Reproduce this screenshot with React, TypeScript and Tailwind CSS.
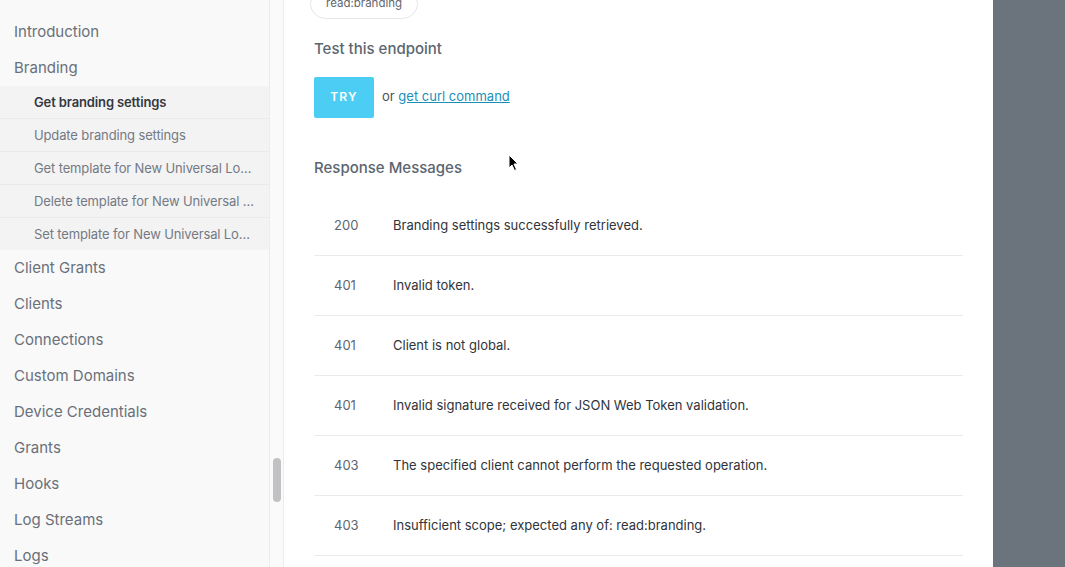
const topBefore = ['Introduction', 'Branding']
const subItems = [
  'Get branding settings',
  'Update branding settings',
  'Get template for New Universal Login Experience',
  'Delete template for New Universal Login Experience',
  'Set template for New Universal Login Experience',
]
const topAfter = [
  'Client Grants',
  'Clients',
  'Connections',
  'Custom Domains',
  'Device Credentials',
  'Grants',
  'Hooks',
  'Log Streams',
  'Logs',
]
const responses = [
  { code: '200', text: 'Branding settings successfully retrieved.' },
  { code: '401', text: 'Invalid token.' },
  { code: '401', text: 'Client is not global.' },
  { code: '401', text: 'Invalid signature received for JSON Web Token validation.' },
  { code: '403', text: 'The specified client cannot perform the requested operation.' },
  { code: '403', text: 'Insufficient scope; expected any of: read:branding.' },
  { code: '429', text: 'Too many requests. Check the X-RateLimit-Limit, X-RateLimit-Remaining and X-RateLimit-Reset headers.' },
]

const font = { fontFamily: 'Inter, "Noto Sans", sans-serif' }

export default function App() {
  return (
    <div className="relative flex h-[567px] w-[1065px] overflow-hidden bg-white" style={font}>
      {/* sidebar */}
      <aside className="flex h-full shrink-0">
        <nav className="w-[270px] border-r border-[#ececec] bg-[#f9f9f9] pt-[14px]">
          {topBefore.map((t) => (
            <div key={t} className="flex h-[36px] items-center pl-[14px] text-[15px] text-[#697079]">
              {t}
            </div>
          ))}
          <div className="bg-[#f3f3f3]">
            {subItems.map((t, i) => (
              <div
                key={t}
                className={`flex h-[33px] items-center border-b border-[#e9e9e9] pl-[34px] pr-[12px] pt-[2px] text-[13px] last:h-[32px] last:border-b-0 ${
                  i === 0 ? 'font-semibold text-[#333840]' : 'text-[#737a83]'
                }`}
              >
                <span className="truncate tracking-[-0.01em]">{t}</span>
              </div>
            ))}
          </div>
          {topAfter.map((t) => (
            <div key={t} className="flex h-[36px] items-center pl-[14px] text-[15px] text-[#697079]">
              {t}
            </div>
          ))}
        </nav>
        <div className="relative w-[14px] border-r border-[#ececec] bg-[#fafafa]">
          <div className="absolute left-[3px] top-[458px] h-[44px] w-[8px] rounded-full bg-[#c2c2c4]" />
        </div>
      </aside>

      {/* main */}
      <main className="w-[709px] shrink-0 pl-[30px] pr-[30px]">
        <div className="-ml-[4px] -mt-[12px] flex">
          <div className="flex h-[31px] items-center rounded-full border border-[#e6e6e6] px-[15px] text-[11.5px] text-[#5f6770]">
            read:branding
          </div>
        </div>
        <h3 className="mt-[19px] text-[15px] font-medium text-[#5c6670]">Test this endpoint</h3>
        <div className="mt-[16px] flex items-center">
          <button className="h-[41px] w-[60px] rounded-[2px] bg-[#4ccdf4] text-[12px] font-semibold tracking-[0.1em] text-white">
            TRY
          </button>
          <span className="ml-[8px] text-[13px] text-[#4a5058]">
            or{' '}
            <a className="text-[#1a8fb8] underline" href="#">
              get curl command
            </a>
          </span>
        </div>
        <h3 className="mt-[39px] text-[15px] font-medium text-[#5c6670]">Response Messages</h3>
        <div className="mt-[17px]">
          {responses.map((r, i) => (
            <div key={i} className="flex h-[60px] items-center border-b border-[#ebebeb]">
              <span className="w-[79px] pl-[20px] text-[13px] text-[#5d6670]">{r.code}</span>
              <span className="truncate text-[13px] text-[#2f343a]">{r.text}</span>
            </div>
          ))}
        </div>
      </main>

      {/* right panel */}
      <div className="h-full flex-1 bg-[#6b737c]" />

      {/* cursor */}
      <svg className="absolute left-[508px] top-[154px]" width="12" height="18" viewBox="0 0 12 18">
        <path d="M1 1 L1 14 L4 11 L6.5 16.5 L8.5 15.5 L6 10 L10 10 Z" fill="#000" stroke="#fff" strokeWidth="1" />
      </svg>
    </div>
  )
}
